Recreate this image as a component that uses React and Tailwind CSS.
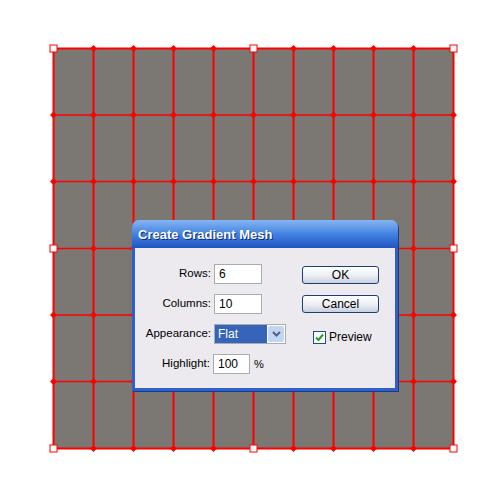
import React from "react";

const xs = [53.5, 93.5, 133.5, 173.5, 213.5, 253.5, 293.5, 333.5, 373.5, 413.5, 453.5];
const ys = [48.5, 115, 181.5, 248.5, 315, 381.5, 448.5];
const handles = [
  [53.5, 48.5], [253.5, 48.5], [453.5, 48.5],
  [53.5, 248.5], [453.5, 248.5],
  [53.5, 448.5], [253.5, 448.5], [453.5, 448.5],
];

const isHandle = (x, y) => handles.some(([hx, hy]) => hx === x && hy === y);

const Mesh = () => (
  <svg width="500" height="500" className="block">
    <rect x="53.5" y="48.5" width="400" height="400" fill="#7b7874" />
    {ys.slice(1, -1).map((y) => (
      <line key={"h" + y} x1="53.5" x2="453.5" y1={y} y2={y} stroke="#ff0000" strokeWidth="1.6" />
    ))}
    {xs.slice(1, -1).map((x) => (
      <line key={"v" + x} x1={x} x2={x} y1="48.5" y2="448.5" stroke="#ff0000" strokeWidth="2" />
    ))}
    <rect x="53.5" y="48.5" width="400" height="400" fill="none" stroke="#ff0000" strokeWidth="2" />
    {/* anchor points */}
    {ys.map((y) =>
      xs.map((x) =>
        isHandle(x, y) ? null : (
          <polygon
            key={x + "-" + y}
            points={`${x - 3.5},${y} ${x},${y - 3.5} ${x + 3.5},${y} ${x},${y + 3.5}`}
            fill="#ff0000"
          />
        )
      )
    )}
    {handles.map(([x, y]) => (
      <rect key={"s" + x + y} x={x - 3.5} y={y - 3.5} width="7" height="7" fill="#fff" stroke="#ff0000" strokeWidth="1" />
    ))}
  </svg>
);

const Field = ({ label, value, width = "w-[48px]" }) => (
  <div className="flex items-center h-[20px]">
    <div className="w-[79px] text-right pr-[3px]">{label}</div>
    <div className={`${width} h-[20px] bg-white border border-[#a5acb2] pl-[4px] flex items-center text-[12px]`}>{value}</div>
  </div>
);

const XpButton = ({ children }) => (
  <div className="w-[77px] h-[18px] rounded-[3px] border border-[#1d3f79] bg-gradient-to-b from-white via-[#eef0f5] to-[#c9d0de] flex items-center justify-center text-[12px] text-black">
    {children}
  </div>
);

export default function App() {
  return (
    <div className="relative w-[500px] h-[500px] bg-white overflow-hidden" style={{ fontFamily: "'Liberation Sans', Arial, sans-serif" }}>
      <Mesh />

      {/* Dialog */}
      <div className="absolute left-[132px] top-[220px] w-[266px] h-[171px] flex flex-col rounded-t-[7px] overflow-hidden shadow-[1px_1px_0_#1a3a8a]">
        <div className="h-[28px] shrink-0 bg-gradient-to-b from-[#86b6f2] via-[#4382e0] to-[#2154c2] flex items-center pl-[6px] pt-[2px]">
          <span className="text-white font-bold text-[13px] [text-shadow:1px_1px_0_#0b2c82]">Create Gradient Mesh</span>
        </div>
        <div className="flex-1 bg-[#ece9ef] border-x-[3px] border-b-[3px] border-[#2f5fc9] flex text-[11.5px] text-black">
          {/* left column */}
          <div className="w-[167px] flex flex-col gap-[10px] pt-[16px]">
            <Field label="Rows:" value="6" />
            <Field label="Columns:" value="10" />
            <div className="flex items-center h-[20px]">
              <div className="w-[79px] text-right pr-[3px]">Appearance:</div>
              <div className="w-[72px] h-[20px] border border-[#a5acb2] bg-white flex">
                <div className="w-[52px] bg-[#3564b8] text-white text-[12px] pl-[3px] flex items-center">Flat</div>
                <div className="w-[16px] ml-[1px] my-[1px] bg-[#c4d5f2] rounded-[2px] flex items-center justify-center">
                  <svg width="9" height="6" viewBox="0 0 9 6">
                    <path d="M1 1 L4.5 4.5 L8 1" fill="none" stroke="#4d6185" strokeWidth="2" />
                  </svg>
                </div>
              </div>
            </div>
            <div className="flex items-center h-[20px]">
              <div className="w-[78px] text-right pr-[3px]">Highlight:</div>
              <div className="w-[37px] h-[20px] bg-white border border-[#a5acb2] pl-[4px] flex items-center text-[12px]">100</div>
              <span className="ml-[4px] text-[11px]">%</span>
            </div>
          </div>

          {/* right column */}
          <div className="flex flex-col pt-[18px]">
            <XpButton>OK</XpButton>
            <div className="mt-[11px]">
              <XpButton>Cancel</XpButton>
            </div>
            <div className="mt-[15px] ml-[11px] flex items-center gap-[3px]">
              <div className="w-[13px] h-[13px] bg-white border border-[#1c5180] flex items-center justify-center">
                <svg width="9" height="9" viewBox="0 0 9 9">
                  <path d="M1 4.5 L3.5 7 L8 1.5" fill="none" stroke="#21a121" strokeWidth="2" />
                </svg>
              </div>
              <span className="text-[12px]">Preview</span>
            </div>
          </div>
        </div>
      </div>
    </div>
  );
}
